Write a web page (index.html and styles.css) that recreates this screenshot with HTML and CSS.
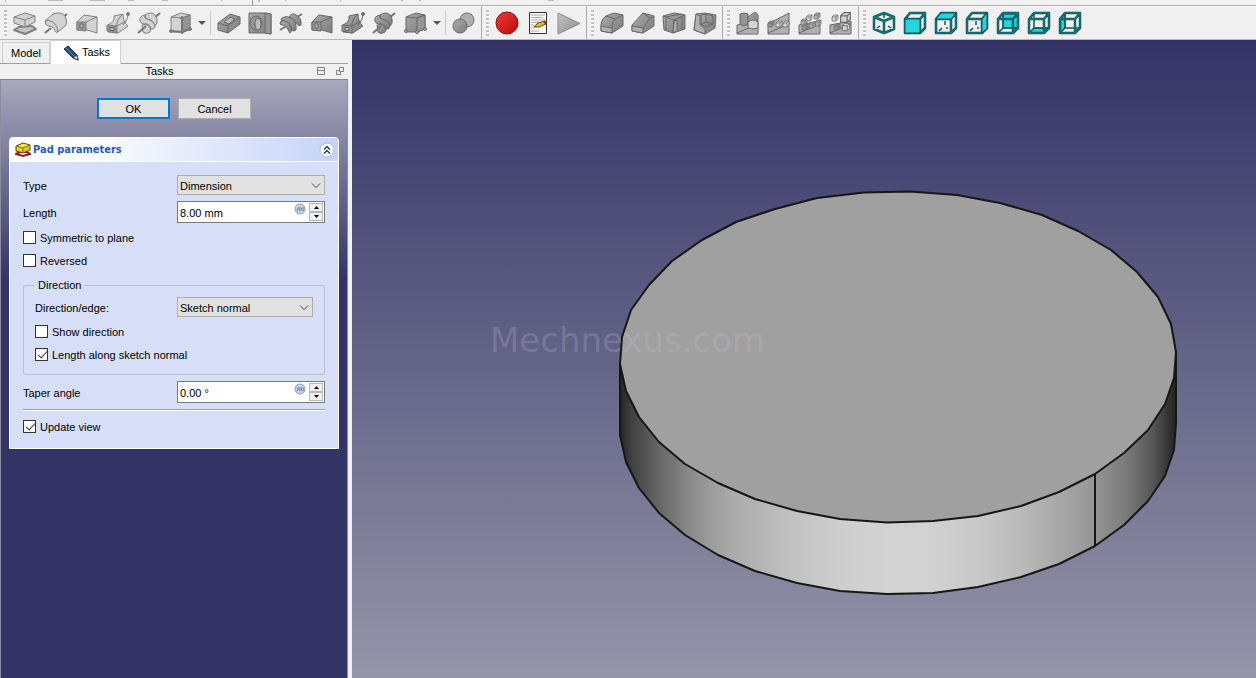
FILE: index.html
```html
<!DOCTYPE html>
<html lang="en">
<head>
    <meta charset="UTF-8">
    <meta name="viewport" content="width=device-width, initial-scale=1.0">
    <title>Pad parameters</title>
    <link rel="stylesheet" href="styles.css">
</head>
<body>

    <!-- shared shapes -->
    <svg class="defs" width="0" height="0" aria-hidden="true">
        <defs>
            <linearGradient id="redBall" x1="0" y1="0" x2="1" y2="1">
                <stop offset="0" stop-color="#f03a3a"/><stop offset="1" stop-color="#c00808"/>
            </linearGradient>
            <linearGradient id="grayFace" x1="0" y1="0" x2="1" y2="1">
                <stop offset="0" stop-color="#c4c4c4"/><stop offset="1" stop-color="#8c8c8c"/>
            </linearGradient>
            <linearGradient id="darkFace" x1="0" y1="0" x2="1" y2="1">
                <stop offset="0" stop-color="#ababab"/><stop offset="1" stop-color="#7c7c7c"/>
            </linearGradient>
        </defs>
        <symbol id="loft" viewBox="0 0 24 24">
            <path d="M2 11 L9 4 L22 6 V22 L12 19 L2 19z"/>
            <path class="line" d="M11 11 L22 6"/>
            <path class="shade" d="M2 11 H11 V20 L2 19z"/>
            <path class="hole" d="M5 13 H8 V17 H5z"/>
        </symbol>
        <symbol id="pipe" viewBox="0 0 24 24">
            <path d="M8 5 L17 3 Q17 11 22 15 L12 22 L2 21 V14 Q9 11 8 5z"/>
            <path class="line" d="M17 3 Q10 9 11 15 L20 10"/>
            <path class="shade" d="M1 14 L11 15 V22 L1 20z"/>
            <path class="hole" d="M4 16.500h4v3h-4z"/>
            <path class="line" d="M17 14 Q22 9 22 4"/>
            <circle class="dot" cx="22" cy="3" r="1.500"/>
        </symbol>
        <symbol id="helix" viewBox="0 0 24 24">
            <path class="bar" d="M15 9 L23 2"/>
            <path d="M8 4 Q14 0 18 4 L20 8 Q21 13 18 15 Q16 16 17 12 Q14 7 9 8z"/>
            <path d="M3 10 Q2 5 8 4 Q6 7 10 8 Q17 10 18 15 Q17 19 14 18 Q13 12 7 13 Q4 13 3 10z"/>
            <path d="M5 14 Q9 12 12 15 Q15 18 13 21 Q9 24 6 21z"/>
            <path class="bar" d="M1 22 L9 15"/>
        </symbol>
        <symbol id="box" viewBox="0 0 24 24">
            <path d="M3 6 L13 2 L22 4 V18 L14 21 H3z"/>
            <path class="shade" d="M14 7 L22 4 V18 L14 21z"/>
            <path class="line" d="M3 6 L14 7 L22 4"/>
        </symbol>
        <symbol id="cube" viewBox="0 0 24 24">
            <path class="wire" d="M2 8 H17 V22 H2z M2 8 L7 2 H22 V17 L17 22 M17 8 L22 2"/>
            <path class="wire-in" d="M2 8 H17 V22 H2z M2 8 L7 2 H22 V17 L17 22 M17 8 L22 2"/>
        </symbol>
        <symbol id="stubs" viewBox="0 0 24 24">
            <path class="stub" d="M11 10 V14 M5 20 L8 17 M12 17 H14"/>
        </symbol>
        <symbol id="back" viewBox="0 0 24 24">
            <path class="stub" d="M7 3 V17 H22 M7 17 L3 21"/>
        </symbol>
        <symbol id="base" viewBox="0 0 24 24">
            <path d="M1 14 L22 10 V23 H1z"/>
            <path class="line" d="M1 22 L22 13"/>
        </symbol>
        <symbol id="small-cube" viewBox="0 0 8 8">
            <path d="M1 3 L3 1 H7 V5 L5 7 H1z"/><path class="line" d="M1 3 H5 V7 M5 3 L7 1"/>
        </symbol>
        <symbol id="fx" viewBox="0 0 12 12">
            <circle class="fx-ring" cx="6" cy="6" r="5"/>
            <path class="fx-mark" d="M3 8.500 L4.500 4 M3 6 H5 M5.500 8 L6 4 M6.500 4.500 L8.500 8 M8.500 4.500 L6.500 8 M9 4 L9.500 8"/>
        </symbol>
    </svg>

    <!-- bottom edge of the toolbar above -->
    <div class="upper-toolbar">
        <svg width="620" height="5" aria-hidden="true">
            <path d="M5 0h1v2h-1z M48 0h15v1h-15z M90 0h15v1h-15z M128 0h6v1h-6z M162 0h6v1h-6z M221 0h1v1h-1z M258 0h2v2h-2z M285 0h1v1h-1z M340 0h1v1h-1z M401 0h2v1h-2z M419 0h2v1h-2z M548 0h6v1h-6z"/>
            <path class="divider" d="M252 0h1v5h-1z"/>
        </svg>
    </div>

    <div class="toolbar">
        <div class="group">
            <span class="grip"></span>
            <button class="tool" title="Pad"><svg class="icon add" viewBox="0 0 24 24">
                <path class="plane" d="M1 19 L6 16 L19 15 L23 18 L12 23z"/>
                <path d="M1 6 L12 2 L22 5 V11 L12 16 L1 12z"/><path class="line" d="M1 6 L12 9 L22 5 M12 9 V16"/>
            </svg></button>
            <button class="tool" title="Revolution"><svg class="icon add" viewBox="0 0 24 24">
                <path class="bar" d="M1 22 L7 17 M19 6 L23 3"/>
                <path d="M1 10 L9 3 Q17 0 21 5 Q24 12 21 15 L14 21 Q12 22 11 20 Q10 15 4 15 Q1 14 1 10z"/>
                <path class="line" d="M1 10 Q4 8 9 11 Q14 15 14 21"/>
            </svg></button>
            <button class="tool" title="Additive loft"><svg class="icon add"><use href="#loft"/></svg></button>
            <button class="tool" title="Additive pipe"><svg class="icon add"><use href="#pipe"/></svg></button>
            <button class="tool" title="Additive helix"><svg class="icon add"><use href="#helix"/></svg></button>
            <button class="tool" title="Additive primitive"><svg class="icon add"><use href="#box"/>
                <path class="bar" d="M3 20 L14 21 L22 18 M14 21 V7"/>
                <g class="dot"><circle cx="3" cy="20" r="1.500"/><circle cx="14" cy="21" r="1.500"/><circle cx="22" cy="18" r="1.500"/><circle cx="14" cy="7" r="1.500"/></g>
            </svg></button>
            <button class="tool-arrow" title="More"><svg width="8" height="4"><path d="M0 0h8l-4 4z"/></svg></button>
            <span class="separator"></span>
            <button class="tool" title="Pocket"><svg class="icon sub" viewBox="0 0 24 24">
                <path d="M1 12 L13 3 L23 6 V13 L11 22 L1 19z"/><path class="line" d="M1 12 L11 15 L23 6 M11 15 V22"/>
                <path class="hole" d="M7 11 L13 6 L18 8 L12 13z"/>
            </svg></button>
            <button class="tool" title="Hole"><svg class="icon sub" viewBox="0 0 24 24">
                <path d="M1 2 L17 2 L23 3 V23 L17 22 H1z"/><path class="shade" d="M17 2 L23 3 V23 L17 22z"/>
                <ellipse class="shade" cx="8" cy="12" rx="6" ry="7"/><ellipse class="hole" cx="10" cy="13" rx="3" ry="6"/>
            </svg></button>
            <button class="tool" title="Groove"><svg class="icon sub" viewBox="0 0 24 24">
                <path class="bar" d="M1 19 L6 16 M18 6 L23 3"/>
                <path d="M10 6 Q13 1 17 4 Q23 7 22 14 Q20 16 17 12 Q14 7 10 6z"/>
                <path d="M3 7 Q7 4 12 7 Q18 10 17 19 Q14 21 13 19 Q11 11 2 9z"/>
                <path d="M2 10 Q8 9 11 14 Q14 20 11 22 Q7 14 1 13z"/>
            </svg></button>
            <button class="tool" title="Subtractive loft"><svg class="icon sub"><use href="#loft"/></svg></button>
            <button class="tool" title="Subtractive pipe"><svg class="icon sub"><use href="#pipe"/></svg></button>
            <button class="tool" title="Subtractive helix"><svg class="icon sub"><use href="#helix"/></svg></button>
            <button class="tool" title="Subtractive primitive"><svg class="icon sub"><use href="#box"/>
                <g class="light"><circle cx="3" cy="20" r="1.500"/><circle cx="14" cy="21" r="1.500"/><circle cx="22" cy="18" r="1.500"/></g>
            </svg></button>
            <button class="tool-arrow" title="More"><svg width="8" height="4"><path d="M0 0h8l-4 4z"/></svg></button>
            <span class="separator"></span>
            <button class="tool" title="Boolean operation"><svg class="icon sub" viewBox="0 0 24 24">
                <circle class="light" cx="15" cy="9" r="7"/><circle cx="8" cy="15" r="7"/>
            </svg></button>
        </div>

        <div class="group">
            <span class="grip"></span>
            <button class="tool" title="Record macro"><svg class="icon" viewBox="0 0 24 24"><circle cx="12" cy="12" r="11" fill="url(#redBall)" stroke="#8c1010"/></svg></button>
            <button class="tool" title="Edit macro"><svg class="icon" viewBox="0 0 24 24">
                <path d="M3.500 1.500 H20.500 V22.500 H3.500z" fill="#fafafa" stroke="#333"/>
                <path d="M5 4 H19 M5 6.500 H16 M5 9 H19 M5 11.500 H12 M5 14 H9 M5 17 H8 M5 20 H13" stroke="#aaa" fill="none"/>
                <path d="M8 16 L12 12 L19 10 L20 13 L13 16z" fill="#e8b81c" stroke="#6a4a10"/><path d="M18 10 L20 13" stroke="#c01818" stroke-width="2"/>
            </svg></button>
            <button class="tool" title="Execute macro"><svg class="icon" viewBox="0 0 24 24"><path d="M1 2 L23 12.500 L1 23z" fill="url(#grayFace)" stroke="#8a8a8a"/></svg></button>
        </div>

        <div class="group">
            <span class="grip"></span>
            <button class="tool" title="Fillet"><svg class="icon sub" viewBox="0 0 24 24">
                <path d="M1 13 Q2 7 6 5 L14 2 L23 4 V15 L12 22 L1 20z"/><path class="light" d="M1 15 L12 17 V22 L1 20z"/><path class="line" d="M12 17 Q12 9 17 7 L23 4 M6 5 L15 8"/>
            </svg></button>
            <button class="tool" title="Chamfer"><svg class="icon sub" viewBox="0 0 24 24">
                <path d="M1 14 L12 2 L23 5 V15 L12 22 L1 20z"/><path class="light" d="M1 15 L12 17 V22 L1 20z"/><path class="line" d="M12 17 L19 7 L23 5 M19 7 L12 2"/>
            </svg></button>
            <button class="tool" title="Draft"><svg class="icon sub" viewBox="0 0 24 24">
                <path d="M1 5 L12 2 L23 4 V18 L11 22 L2 19z"/><path class="light" d="M12 10 L15 9 V20 L11 22z"/><path class="line" d="M1 5 L12 9 L23 4 M12 9 L11 22 M3 6 L20 3 M4 7 V19 M20 6 V18"/>
            </svg></button>
            <button class="tool" title="Thickness"><svg class="icon sub" viewBox="0 0 24 24">
                <path d="M3 3 L12 2 L23 4 L22 17 L12 23 L1 19z"/><path class="light" d="M3 3 L7 5 V14 L12 18 V23 L1 19z"/><path d="M8 4 L13 3 L20 5 V13 L13 16 L8 13z"/><path class="line" d="M13 3 V11 L20 13 M13 11 L8 13"/>
            </svg></button>
        </div>

        <div class="group">
            <span class="grip"></span>
            <button class="tool" title="Mirrored"><svg class="icon sub"><use class="light" href="#base"/>
                <path class="shade" d="M4 3 L8 2 L12 3 V13 L8 15 L4 13z"/><path d="M12 6 L19 1 L22 4 V10 L12 13z"/><path class="pale" d="M12 11 Q17 7 22 11 V17 Q17 19 12 17z"/>
            </svg></button>
            <button class="tool" title="Linear pattern"><svg class="icon sub"><path class="light" d="M1 13 L22 2 V23 H1z"/><path class="line" d="M1 22 L22 13"/>
                <use class="shade" href="#small-cube" x="0" y="9" width="8" height="8"/><use class="pale" href="#small-cube" x="8" y="9" width="8" height="8"/><use class="pale" href="#small-cube" x="15" y="9" width="8" height="8"/>
            </svg></button>
            <button class="tool" title="Polar pattern"><svg class="icon sub"><use class="light" href="#base"/>
                <use class="pale" href="#small-cube" x="7" y="3" width="8" height="8"/><use class="light" href="#small-cube" x="15" y="1" width="8" height="8"/><use class="light" href="#small-cube" x="2" y="7" width="8" height="8"/><use class="light" href="#small-cube" x="16" y="8" width="8" height="8"/><use class="shade" href="#small-cube" x="3" y="12" width="8" height="8"/><use class="light" href="#small-cube" x="10" y="10" width="8" height="8"/>
            </svg></button>
            <button class="tool" title="MultiTransform"><svg class="icon sub"><use class="light" href="#base"/>
                <use class="pale" href="#small-cube" x="10" y="0" width="13" height="13"/><use class="pale" href="#small-cube" x="2" y="3" width="8" height="8"/><use class="shade" href="#small-cube" x="4" y="12" width="8" height="8"/><use class="pale" href="#small-cube" x="12" y="11" width="10" height="10"/>
            </svg></button>
        </div>

        <div class="group last">
            <span class="grip"></span>
            <button class="tool" title="Isometric"><svg class="icon" viewBox="0 0 24 24">
                <path class="wire" d="M12 2 L22 6 V18 L12 22 L2 18 V6z M2 6 L12 10 L22 6 M12 10 V22"/>
                <path class="wire-in" d="M12 2 L22 6 V18 L12 22 L2 18 V6z M2 6 L12 10 L22 6 M12 10 V22"/>
                <path class="stub" d="M12 3 V7 M5 17 L8 15 M19 17 L16 15"/>
            </svg></button>
            <button class="tool" title="Front"><svg class="icon"><use href="#cube"/><path class="face" d="M2 8 H17 V22 H2z"/></svg></button>
            <button class="tool" title="Top"><svg class="icon"><use href="#stubs"/><use href="#cube"/><path class="face" d="M2 8 L7 2 H22 L17 8z"/></svg></button>
            <button class="tool" title="Right"><svg class="icon"><use href="#stubs"/><use href="#cube"/><path class="face" d="M17 8 L22 2 V17 L17 22z"/></svg></button>
            <button class="tool" title="Rear"><svg class="icon"><path class="face" d="M7 3 H22 V17 H7z"/><use href="#back"/><use href="#cube"/></svg></button>
            <button class="tool" title="Bottom"><svg class="icon"><path class="face" d="M2 22 L7 17 H22 L17 22z"/><use href="#back"/><use href="#cube"/></svg></button>
            <button class="tool" title="Left"><svg class="icon"><path class="face" d="M2 8 L7 2 V17 L2 22z"/><use href="#back"/><use href="#cube"/></svg></button>
        </div>
    </div>

    <div class="main">
        <div class="dock">
            <div class="tabs">
                <button class="tab">Model</button>
                <button class="tab active">
                    <svg width="16" height="16" viewBox="0 0 16 16" aria-hidden="true">
                        <path d="M1 4 L5 1 L14 10 L15 15 L10 13z" fill="#2a4d7c" stroke="#16304f"/>
                        <path d="M3 3 L12 12" stroke="#5b82b5"/><path d="M10 13 L14 10 L15 15z" fill="#e6e0d0" stroke="#444"/>
                    </svg>
                    Tasks
                </button>
            </div>
            <div class="dock-title">
                <span>Tasks</span>
                <button title="Collapse"><svg width="9" height="9"><path d="M.5 .5h7v7h-7z M.5 3.500h7"/></svg></button>
                <button title="Float"><svg width="9" height="9"><path d="M3.500 .5h4v4h-4z M3 3.500h-2.500v4h4v-2.500"/></svg></button>
            </div>

            <form class="task-panel">
                <div class="actions">
                    <button type="submit" class="btn default">OK</button>
                    <button type="button" class="btn">Cancel</button>
                </div>

                <div class="task-box">
                    <div class="task-header">
                        <svg width="16" height="16" viewBox="0 0 16 16" aria-hidden="true">
                            <path d="M1 12 L5 10 H12 L15 12 L8 14z" fill="#fff" stroke="#8c1a1a" stroke-width="2"/>
                            <path d="M1 4 L8 1 L15 3 V8 L8 11 L1 9z" fill="#e6c81e" stroke="#5c4c08"/>
                            <path d="M1 4 L8 6 L15 3 M8 6 V11" fill="none" stroke="#8a7510"/>
                            <path d="M3 4 L8 2 L13 3 L8 5z" fill="#f8ea58"/>
                        </svg>
                        <h2>Pad parameters</h2>
                        <button type="button" class="collapse" title="Collapse"><svg width="16" height="16" viewBox="0 0 16 16">
                            <circle cx="8" cy="8" r="7" fill="#fff" stroke="#b4bedc"/>
                            <path d="M5 7.500 L8 4.500 L11 7.500 M5 11.500 L8 8.500 L11 11.500" fill="none" stroke="#153f92" stroke-width="1.500"/>
                        </svg></button>
                    </div>

                    <div class="task-body">
                        <div class="row">
                            <label for="type">Type</label>
                            <div class="select">
                                <select id="type"><option>Dimension</option><option>To last</option><option>To first</option></select>
                                <svg width="10" height="6"><path d="M1 .5 L5 4.500 L9 .5"/></svg>
                            </div>
                        </div>
                        <div class="row">
                            <label for="length">Length</label>
                            <div class="spin">
                                <input type="text" id="length" value="8.00 mm">
                                <button type="button" class="fx" title="Expression"><svg width="12" height="12"><use href="#fx"/></svg></button>
                                <div class="steps">
                                    <button type="button" title="Up"><svg width="5" height="3"><path d="M0 3h5l-2.500-3z"/></svg></button>
                                    <button type="button" title="Down"><svg width="5" height="3"><path d="M0 0h5l-2.500 3z"/></svg></button>
                                </div>
                            </div>
                        </div>
                        <label class="check"><input type="checkbox" name="symmetric"><span>Symmetric to plane</span></label>
                        <label class="check"><input type="checkbox" name="reversed"><span>Reversed</span></label>

                        <fieldset>
                            <legend>Direction</legend>
                            <div class="row">
                                <label for="edge">Direction/edge:</label>
                                <div class="select">
                                    <select id="edge"><option>Sketch normal</option><option>Select reference...</option></select>
                                    <svg width="10" height="6"><path d="M1 .5 L5 4.500 L9 .5"/></svg>
                                </div>
                            </div>
                            <label class="check"><input type="checkbox" name="show"><span>Show direction</span></label>
                            <label class="check"><input type="checkbox" name="along" checked><span>Length along sketch normal</span></label>
                        </fieldset>

                        <div class="row">
                            <label for="taper">Taper angle</label>
                            <div class="spin">
                                <input type="text" id="taper" value="0.00 °">
                                <button type="button" class="fx" title="Expression"><svg width="12" height="12"><use href="#fx"/></svg></button>
                                <div class="steps">
                                    <button type="button" title="Up"><svg width="5" height="3"><path d="M0 3h5l-2.500-3z"/></svg></button>
                                    <button type="button" title="Down"><svg width="5" height="3"><path d="M0 0h5l-2.500 3z"/></svg></button>
                                </div>
                            </div>
                        </div>
                        <hr>
                        <label class="check"><input type="checkbox" name="update" checked><span>Update view</span></label>
                    </div>
                </div>
            </form>
        </div>

        <div class="view">
            <svg viewBox="352 40 904 638" preserveAspectRatio="xMidYMid slice">
                <defs>
                    <linearGradient id="side" gradientUnits="userSpaceOnUse" x1="620" y1="0" x2="1176" y2="0">
                        <stop offset="0" stop-color="#242424"/>
                        <stop offset=".02" stop-color="#404040"/>
                        <stop offset=".07" stop-color="#666"/>
                        <stop offset=".14" stop-color="#929292"/>
                        <stop offset=".2" stop-color="#aaa"/>
                        <stop offset=".29" stop-color="#bebebe"/>
                        <stop offset=".38" stop-color="#ccc"/>
                        <stop offset=".48" stop-color="#d3d3d3"/>
                        <stop offset=".56" stop-color="#d1d1d1"/>
                        <stop offset=".65" stop-color="#c8c8c8"/>
                        <stop offset=".73" stop-color="#b8b8b8"/>
                        <stop offset=".85" stop-color="#979797"/>
                        <stop offset=".91" stop-color="#7a7a7a"/>
                        <stop offset=".96" stop-color="#555"/>
                        <stop offset="1" stop-color="#222"/>
                    </linearGradient>
                </defs>
                <!-- side wall, then the top face over it -->
                <path class="edge" fill="url(#side)" d="M620 364 L620 435 L626 462 L639 488 L659 513 L685 535 L718 555 L755 571 L797 583 L840 591 L887 594 L933 593 L978 587 L1021 577 L1059 564 L1095 546 L1124 525 L1148 501 L1165 476 L1174 450 L1176 423 L1176 352z"/>
                <path class="edge" fill="#a0a0a0" d="M910 191.500 L957 195 L1000 203 L1042 215 L1078 231 L1111 250 L1137 272 L1158 297 L1171 324 L1176 352 L1174 378 L1165 404 L1148 430 L1124 453 L1095 474 L1059 492 L1021 506 L978 516 L933 521 L887 522.500 L840 519 L797 511 L755 499 L718 483 L685 464 L659 442 L639 417 L626 391 L620 364 L622 337 L631 310 L649 285 L672 261 L702 240 L736 222 L775 209 L817 198 L864 192.500z"/>
                <path class="edge" d="M1095 474 V546"/>
                <text class="watermark" x="490" y="352">Mechnexus.com</text>
            </svg>
        </div>
    </div>

</body>
</html>
```
FILE: styles.css
```css
* {
    box-sizing: border-box;
}

body {
    margin: 0;
    height: 100vh;
    display: flex;
    flex-direction: column;
    background: #f0f0f0;
    color: #000;
    font-family: "Liberation Sans", Arial, sans-serif;
    font-size: 11px;
    line-height: 15px;
    overflow: hidden;
}

button, input, select {
    font: inherit;
    color: inherit;
    margin: 0;
    padding: 0;
}

button {
    border: none;
    background: none;
}

svg {
    display: block;
}

.defs {
    position: absolute;
}

/* toolbars */
.upper-toolbar {
    height: 5px;
    overflow: hidden;
}

.upper-toolbar path {
    fill: #bbb;
}

.upper-toolbar .divider {
    fill: #999;
}

.toolbar {
    display: flex;
    height: 35px;
    border-top: 1px solid #acacac;
    border-bottom: 1px solid #b8b8b8;
}

.group {
    display: flex;
    align-items: center;
    padding: 0 1px 0 4px;
    border-top: 1px solid #fff;
    border-right: 1px solid #a8a8a8;
}

.group.last {
    flex: 1;
    border-right: none;
}

.grip {
    width: 3px;
    height: 27px;
    margin-right: 3px;
    background: repeating-linear-gradient(#c0c0c0 0 2px, #fafafa 2px 4px);
}

.tool {
    padding: 0 4px 0 3px;
}

.tool-arrow {
    padding: 0 4px 0 2px;
    fill: #555;
}

.separator {
    width: 1px;
    height: 24px;
    margin-right: 3px;
    background: #c8c8c8;
}

.icon {
    width: 24px;
    height: 24px;
    stroke-linejoin: round;
}

.add {
    fill: #d2d2d2;
    stroke: #808080;
}

.sub {
    fill: url(#darkFace);
    stroke: #686868;
}

.shade {
    fill: #959595;
}

.line {
    fill: none;
}

.hole {
    fill: #bcbcbc;
    stroke: #666;
}

.light {
    fill: #b0b0b0;
}

.pale {
    fill: #d4d4d4;
}

.plane {
    fill: #c4c4c4;
    stroke: #808080;
    stroke-width: 2;
}

.bar {
    fill: none;
    stroke: #747474;
    stroke-width: 2;
}

.dot {
    fill: #787878;
}

#small-cube {
    stroke-width: .7;
}

.wire {
    fill: none;
    stroke: #0d5557;
    stroke-width: 2.5;
}

.wire-in {
    fill: none;
    stroke: #2a9c9e;
    stroke-width: .6;
}

.stub {
    fill: none;
    stroke: #0d5557;
    stroke-width: 1.5;
}

.face {
    fill: #22d6dc;
    stroke: #0d5557;
}

/* left dock */
.main {
    flex: 1;
    display: flex;
    gap: 4px;
    min-height: 0;
}

.dock {
    flex: none;
    width: 348px;
    display: flex;
    flex-direction: column;
}

.tabs {
    display: flex;
    align-items: flex-end;
    height: 24px;
    padding-left: 2px;
    border-bottom: 1px solid #a0a0a0;
}

.tab {
    display: flex;
    align-items: center;
    gap: 3px;
    height: 21px;
    padding: 0 8px;
    border: 1px solid #d0d0d0;
    border-bottom: none;
}

.tab.active {
    height: 24px;
    margin-bottom: -1px;
    padding: 0 10px 0 12px;
    background: #fff;
}

.dock-title {
    display: flex;
    align-items: center;
    gap: 10px;
    height: 16px;
    padding: 0 3px 0 12px;
    border-bottom: 1px solid #85858f;
}

.dock-title span {
    flex: 1;
    text-align: center;
}

.dock-title path {
    fill: none;
    stroke: #808080;
}

.task-panel {
    flex: 1;
    padding: 18px 8px;
    border: 1px solid #8c8ca0;
    border-width: 0 1px;
    background: #333366 linear-gradient(#a8a8be, #333366) no-repeat;
    background-size: 100% 200px;
}

.actions {
    display: flex;
    justify-content: center;
    gap: 8px;
    margin-bottom: 18px;
}

.btn {
    width: 73px;
    height: 21px;
    padding-top: 1px;
    border: 1px solid #adadad;
    background: #e1e1e1;
}

.btn.default {
    border: 2px solid #0078d7;
}

.task-box {
    border: 1px solid #fff;
    border-radius: 4px 4px 0 0;
    background: #d6dff7;
}

.task-header {
    display: flex;
    align-items: center;
    gap: 2px;
    height: 24px;
    padding: 0 3px 0 5px;
    border-bottom: 1px solid #fff;
    border-radius: 3px 3px 0 0;
    background: linear-gradient(to right, #fff 20%, #c6d3f7);
}

.task-header h2 {
    flex: 1;
    margin: 0;
    color: #215dc6;
    font-family: "DejaVu Sans Condensed", "DejaVu Sans", sans-serif;
    font-size: 11px;
}

.task-body {
    display: flex;
    flex-direction: column;
    gap: 6px;
    padding: 13px;
}

.row {
    display: flex;
    align-items: center;
}

.row label {
    flex: none;
    width: 154px;
    padding-top: 2px;
}

.select {
    position: relative;
    flex: 1;
}

.select select {
    display: block;
    width: 100%;
    height: 20px;
    padding: 2px 2px 0;
    border: 1px solid #adadad;
    border-radius: 0;
    background: #e1e1e1;
    appearance: none;
}

.select svg {
    position: absolute;
    right: 4px;
    top: 8px;
    fill: none;
    stroke: #444;
    pointer-events: none;
}

.spin {
    flex: 1;
    min-width: 0;
    display: flex;
    height: 22px;
    padding: 1px;
    border: 1px solid #7a7a7a;
    background: #fff;
}

.spin input {
    flex: 1;
    min-width: 0;
    padding: 2px 1px 0;
    border: none;
    background: none;
}

.fx {
    align-self: flex-start;
    margin-right: 3px;
}

.fx-ring {
    fill: #c3d3e6;
    stroke: #8aa0bc;
}

.fx-mark {
    fill: none;
    stroke: #5478a0;
    stroke-width: .7;
}

.steps {
    display: flex;
    flex-direction: column;
    width: 14px;
}

.steps button {
    flex: 1;
    display: flex;
    align-items: center;
    justify-content: center;
    border: 1px solid #b8b8b8;
    background: #f0f0f0;
}

.check {
    display: flex;
    align-items: center;
    gap: 4px;
    height: 17px;
}

.check span {
    padding-top: 2px;
}

.check input {
    position: relative;
    width: 13px;
    height: 13px;
    border: 1px solid #333;
    background: #fff;
    appearance: none;
}

.check input:checked::after {
    content: "";
    position: absolute;
    left: 4px;
    top: 0;
    width: 4px;
    height: 8px;
    border: solid #333;
    border-width: 0 1px 1px 0;
    transform: rotate(42deg);
}

fieldset {
    display: flex;
    flex-direction: column;
    gap: 6px;
    min-width: 0;
    margin: 3px 0 0;
    padding: 4px 11px 11px;
    border: 1px solid #b9bfcd;
    border-radius: 3px;
}

fieldset .row label {
    width: 142px;
}

legend {
    padding: 0 3px;
}

hr {
    width: 100%;
    margin: 0 0 1px;
    border: none;
    border-top: 1px solid #a0a0a0;
    border-bottom: 1px solid #fff;
}

/* 3D view */
.view {
    flex: 1;
    min-width: 0;
    background: linear-gradient(#333366, #9595a9);
}

.view svg {
    width: 100%;
    height: 100%;
}

.edge {
    stroke: #161616;
    stroke-width: 2;
    stroke-linejoin: round;
}

.watermark {
    font-family: "DejaVu Sans", Verdana, sans-serif;
    font-size: 34px;
    fill: #c8c8d2;
    fill-opacity: .22;
}
```
